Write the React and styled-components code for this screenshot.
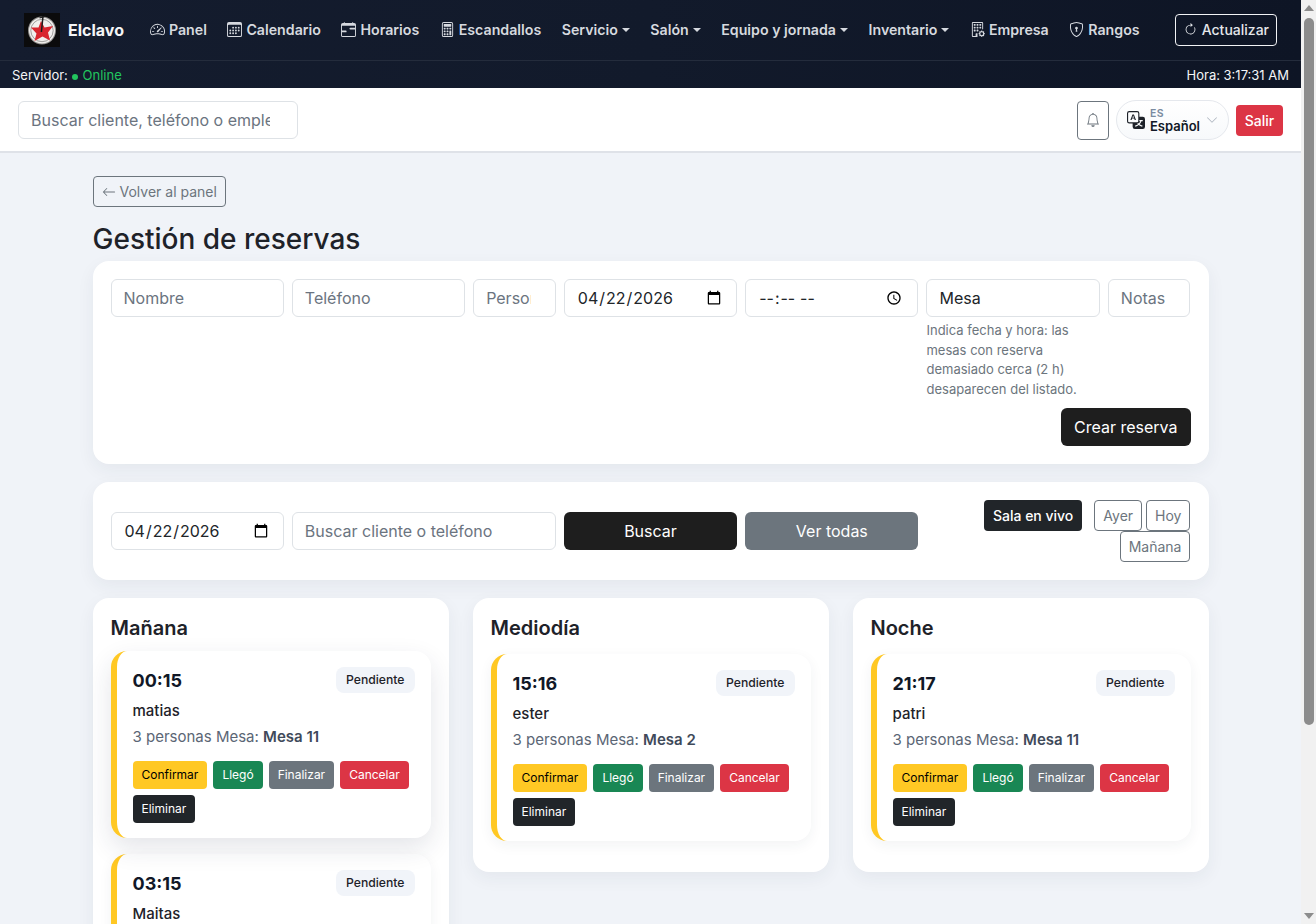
import React from "react";
import styled, { createGlobalStyle } from "styled-components";
import {
  BsSpeedometer2,
  BsCalendar3,
  BsCalendarRange,
  BsCalculator,
  BsBuildingGear,
  BsShieldLock,
  BsArrowClockwise,
  BsBell,
  BsTranslate,
  BsChevronDown,
  BsArrowLeft,
} from "react-icons/bs";

const GlobalStyle = createGlobalStyle`
  body {
    margin: 0;
    background: #f0f3f8;
    color: #1e2229;
    font-family: Inter, "Liberation Sans", sans-serif;
  }
  * { box-sizing: border-box; }
`;

const navLinks = [
  { label: "Panel", icon: <BsSpeedometer2 /> },
  { label: "Calendario", icon: <BsCalendar3 /> },
  { label: "Horarios", icon: <BsCalendarRange /> },
  { label: "Escandallos", icon: <BsCalculator /> },
  { label: "Servicio", caret: true },
  { label: "Salón", caret: true },
  { label: "Equipo y jornada", caret: true },
  { label: "Inventario", caret: true },
  { label: "Empresa", icon: <BsBuildingGear /> },
  { label: "Rangos", icon: <BsShieldLock /> },
];

const actions = [
  { label: "Confirmar", bg: "#ffc824", fg: "#000" },
  { label: "Llegó", bg: "#198754", fg: "#fff" },
  { label: "Finalizar", bg: "#6c757d", fg: "#fff" },
  { label: "Cancelar", bg: "#dc3545", fg: "#fff" },
  { label: "Eliminar", bg: "#212529", fg: "#fff" },
];

const shifts = [
  {
    title: "Mañana",
    bookings: [
      { time: "00:15", name: "matias", table: "Mesa 11", lifted: true },
      { time: "03:15", name: "Maitas", table: "Mesa 11" },
    ],
  },
  { title: "Mediodía", bookings: [{ time: "15:16", name: "ester", table: "Mesa 2" }] },
  { title: "Noche", bookings: [{ time: "21:17", name: "patri", table: "Mesa 11" }] },
];

const Logo = () => (
  <LogoBox>
    <svg width="36" height="34" viewBox="0 0 36 34">
      <rect width="36" height="34" fill="#0b0b0c" />
      <circle cx="18" cy="17.5" r="14" fill="#8f8d8b" />
      <circle cx="18" cy="17.5" r="13" fill="#f1efed" />
      <circle cx="18" cy="17.5" r="11.2" fill="none" stroke="#6a6866" strokeWidth="0.6" />
      <polygon
        points="17,8 20.5,14.5 29,13 24,19.5 26,27.5 18.5,23.5 10.5,28 12.5,20.5 7,14.5 14.5,14.5"
        fill="#d9252e"
      />
      <path d="M19 3 L17.4 19" stroke="#1d1d1d" strokeWidth="1.5" />
      <path d="M15.5 5 L21.5 3.2" stroke="#1d1d1d" strokeWidth="1.3" />
    </svg>
  </LogoBox>
);

const BookingCard = ({ booking }) => (
  <Booking $lifted={booking.lifted}>
    <BookingHead>
      <BookingTime>{booking.time}</BookingTime>
      <StatusBadge>Pendiente</StatusBadge>
    </BookingHead>
    <BookingName>{booking.name}</BookingName>
    <BookingMeta>
      3 personas Mesa: <strong>{booking.table}</strong>
    </BookingMeta>
    <ActionRow>
      {actions.map((a) => (
        <ActionButton key={a.label} $bg={a.bg} $fg={a.fg}>
          {a.label}
        </ActionButton>
      ))}
    </ActionRow>
  </Booking>
);

export default function App() {
  return (
    <>
      <GlobalStyle />
      <Page>
        <Header>
          <NavBar>
            <Logo />
            <Brand>Elclavo</Brand>
            <NavList>
              {navLinks.map((link) => (
                <NavLink key={link.label}>
                  {link.icon}
                  {link.label}
                  {link.caret && <Caret />}
                </NavLink>
              ))}
            </NavList>
            <RefreshButton>
              <BsArrowClockwise />
              Actualizar
            </RefreshButton>
          </NavBar>
          <StatusBar>
            <span>
              Servidor: <OnlineText><Dot />Online</OnlineText>
            </span>
            <span>Hora: 3:17:31 AM</span>
          </StatusBar>
        </Header>

        <TopBar>
          <SearchInput placeholder="Buscar cliente, teléfono o empleado" />
          <TopActions>
            <BellButton>
              <BsBell />
            </BellButton>
            <LangPill>
              <BsTranslate size={18} />
              <LangText>
                <LangCode>ES</LangCode>
                <LangName>Español</LangName>
              </LangText>
              <LangChevron />
            </LangPill>
            <LogoutButton>Salir</LogoutButton>
          </TopActions>
        </TopBar>

        <Main>
          <BackButton>
            <BsArrowLeft />
            Volver al panel
          </BackButton>
          <Title>Gestión de reservas</Title>

          <Panel>
            <FormGrid>
              <Field $span={2}><Input placeholder="Nombre" /></Field>
              <Field $span={2}><Input placeholder="Teléfono" /></Field>
              <Field $span={1}><Input placeholder="Personas" /></Field>
              <Field $span={2}><Input type="date" defaultValue="2026-04-22" /></Field>
              <Field $span={2}><Input type="time" /></Field>
              <Field $span={2}>
                <Input defaultValue="Mesa" />
                <Hint>
                  Indica fecha y hora: las mesas con reserva demasiado cerca (2 h) desaparecen del
                  listado.
                </Hint>
              </Field>
              <Field $span={1}><Input placeholder="Notas" /></Field>
            </FormGrid>
            <SubmitRow>
              <PrimaryButton>Crear reserva</PrimaryButton>
            </SubmitRow>
          </Panel>

          <Panel>
            <FilterGrid>
              <Field $span={2}><Input type="date" defaultValue="2026-04-22" /></Field>
              <Field $span={3}><Input placeholder="Buscar cliente o teléfono" /></Field>
              <Field $span={2}><WideButton $bg="#1e1e1e">Buscar</WideButton></Field>
              <Field $span={2}><WideButton $bg="#6c757d">Ver todas</WideButton></Field>
              <Field $span={3}>
                <QuickLinks>
                  <LiveButton>Sala en vivo</LiveButton>
                  <DayButton>Ayer</DayButton>
                  <DayButton>Hoy</DayButton>
                  <DayButton>Mañana</DayButton>
                </QuickLinks>
              </Field>
            </FilterGrid>
          </Panel>

          <Shifts>
            {shifts.map((shift) => (
              <ShiftColumn key={shift.title}>
                <ShiftTitle>{shift.title}</ShiftTitle>
                {shift.bookings.map((b) => (
                  <BookingCard key={b.time} booking={b} />
                ))}
              </ShiftColumn>
            ))}
          </Shifts>
        </Main>
      </Page>

      <ScrollTrack>
        <ScrollArrow />
        <ScrollThumb />
        <ScrollArrow $down />
      </ScrollTrack>
    </>
  );
}

// Styled Components
const Page = styled.div`
  margin-right: 15px;
`;

const ScrollTrack = styled.div`
  position: fixed;
  top: 0;
  right: 0;
  bottom: 0;
  display: flex;
  flex-direction: column;
  align-items: center;
  width: 15px;
  background: #f1f1f1;
`;

const ScrollArrow = styled.i`
  flex: none;
  width: 0;
  height: 0;
  margin: ${(p) => (p.$down ? "auto 0 5px" : "5px 0 0")};
  border-left: 5px solid transparent;
  border-right: 5px solid transparent;
  border-bottom: ${(p) => (p.$down ? "0" : "6px solid #8c8c8c")};
  border-top: ${(p) => (p.$down ? "6px solid #8c8c8c" : "0")};
`;

const ScrollThumb = styled.div`
  width: 10px;
  height: 707px;
  margin-top: 7px;
  background: #8c8c8c;
  border-radius: 5px;
`;

const Header = styled.header`
  background: linear-gradient(90deg, #141c2e 0%, #121a2b 50%, #0e1525 100%);
  color: #fff;
`;

const NavBar = styled.nav`
  display: flex;
  align-items: center;
  height: 61px;
  padding: 0 24px 1px;
  border-bottom: 1px solid #242c3c;
`;

const LogoBox = styled.div`
  display: flex;
  width: 36px;
  height: 34px;
`;

const Brand = styled.span`
  margin-left: 8px;
  font-size: 16px;
  font-weight: 700;
  color: #f4f5f7;
`;

const NavList = styled.div`
  display: flex;
  align-items: center;
  gap: 20.5px;
  margin-left: 26px;
`;

const NavLink = styled.a`
  display: flex;
  align-items: center;
  gap: 4px;
  font-size: 14.2px;
  font-weight: 600;
  color: #d6d9df;
  white-space: nowrap;

  svg {
    width: 15px;
    height: 15px;
  }
`;

const Caret = styled.i`
  width: 0;
  height: 0;
  border-top: 4px solid #d6d9df;
  border-left: 4px solid transparent;
  border-right: 4px solid transparent;
`;

const RefreshButton = styled.button`
  display: flex;
  align-items: center;
  gap: 5px;
  height: 32px;
  margin-left: auto;
  padding: 0 7px 0 8px;
  background: transparent;
  border: 1px solid #f2f3f5;
  border-radius: 4px;
  color: #e4e6ea;
  font: 500 14px Inter, sans-serif;

  svg {
    width: 13px;
    height: 13px;
  }
`;

const StatusBar = styled.div`
  display: flex;
  justify-content: space-between;
  align-items: center;
  height: 27px;
  padding: 0 12px;
  font-size: 13px;
  color: #f4f5f7;
`;

const OnlineText = styled.span`
  color: #22c55e;
`;

const Dot = styled.i`
  display: inline-block;
  width: 6px;
  height: 6px;
  margin: 0 5px 0 0;
  border-radius: 50%;
  background: #22c55e;
`;

const TopBar = styled.div`
  display: flex;
  justify-content: space-between;
  align-items: center;
  height: 65px;
  padding: 1px 18px 0;
  background: #fff;
  border-bottom: 2px solid #dfe2e8;
`;

const SearchInput = styled.input`
  width: 280px;
  height: 38px;
  padding: 6px 27px 6px 12px;
  background: #fff;
  border: 1px solid #dee2e6;
  border-radius: 6px;
  font: 400 16px Inter, sans-serif;
  color: #212529;

  &::placeholder {
    color: #6b7480;
  }
`;

const TopActions = styled.div`
  display: flex;
  align-items: center;
  gap: 7px;
`;

const BellButton = styled.button`
  display: flex;
  justify-content: center;
  align-items: center;
  width: 32px;
  height: 39px;
  padding: 0;
  background: transparent;
  border: 1px solid #6c757d;
  border-radius: 4px;
  color: #6c757d;
  font-size: 14px;
`;

const LangPill = styled.div`
  display: flex;
  align-items: center;
  width: 113px;
  height: 40px;
  padding: 0 10px;
  gap: 5px;
  background: linear-gradient(180deg, #ffffff, #f7f9fb);
  border: 1px solid #e5e8ed;
  border-radius: 20px;
  color: #1e2229;
`;

const LangText = styled.div`
  display: flex;
  flex-direction: column;
  line-height: 13px;
`;

const LangCode = styled.span`
  font-size: 10.5px;
  font-weight: 600;
  color: #7a8ba0;
  letter-spacing: 0.3px;
`;

const LangName = styled.span`
  font-size: 13px;
  font-weight: 600;
  color: #111827;
`;

const LangChevron = styled(BsChevronDown)`
  width: 12px;
  height: 12px;
  margin-left: auto;
  color: #a9b1bc;
`;

const LogoutButton = styled.button`
  height: 31px;
  width: 47px;
  padding: 0;
  background: #dc3545;
  border: 0;
  border-radius: 4px;
  color: #fff;
  font: 500 14px Inter, sans-serif;
`;

const Main = styled.main`
  max-width: 1140px;
  margin: 0 auto;
  padding: 23px 12px 100px;
`;

const BackButton = styled.button`
  display: flex;
  align-items: center;
  gap: 4px;
  height: 31px;
  padding: 0 8px;
  background: transparent;
  border: 1px solid #6c757d;
  border-radius: 4px;
  color: #6c757d;
  font: 400 14px Inter, sans-serif;
`;

const Title = styled.h2`
  margin: 15px 0 5px;
  font-size: 28px;
  font-weight: 500;
  line-height: 34px;
  color: #1e2229;
`;

const Panel = styled.section`
  margin-bottom: 18px;
  padding: 18px;
  background: #fff;
  border-radius: 16px;
  box-shadow: 0 6px 18px rgba(30, 45, 70, 0.06);
`;

const FormGrid = styled.div`
  display: grid;
  grid-template-columns: repeat(12, 1fr);
  gap: 8px;
`;

const FilterGrid = styled(FormGrid)`
  align-items: center;
`;

const Field = styled.div`
  grid-column: span ${(p) => p.$span};
  min-width: 0;
`;

const Input = styled.input`
  display: block;
  width: 100%;
  height: 38px;
  padding: 6px 24px 6px 12px;
  background: #fff;
  border: 1px solid #dee2e6;
  border-radius: 6px;
  font: 400 16px Inter, sans-serif;
  color: #212529;

  &[type="date"],
  &[type="time"] {
    padding-right: 12px;
  }

  &::placeholder {
    color: #6b7480;
  }
`;

const Hint = styled.div`
  margin-top: 4px;
  font-size: 13px;
  line-height: 19.5px;
  color: #6c757d;
`;

const SubmitRow = styled.div`
  display: flex;
  justify-content: flex-end;
  margin-top: 9px;
`;

const PrimaryButton = styled.button`
  height: 38px;
  padding: 0 13px;
  background: #1e1e1e;
  border: 0;
  border-radius: 6px;
  color: #fff;
  font: 400 16px Inter, sans-serif;
`;

const WideButton = styled.button`
  width: 100%;
  height: 38px;
  background: ${(p) => p.$bg};
  border: 0;
  border-radius: 6px;
  color: #fff;
  font: 400 16px Inter, sans-serif;
`;

const QuickLinks = styled.div`
  display: flex;
  flex-wrap: wrap;
  justify-content: flex-end;
  row-gap: 0;
`;

const LiveButton = styled.button`
  height: 31px;
  margin-right: 8px;
  padding: 0 9px;
  background: #212529;
  border: 0;
  border-radius: 4px;
  color: #fff;
  font: 500 14px Inter, sans-serif;
`;

const DayButton = styled.button`
  height: 31px;
  margin-left: 4px;
  padding: 0 8px;
  background: transparent;
  border: 1px solid #6c757d;
  border-radius: 4px;
  color: #6c757d;
  font: 400 14px Inter, sans-serif;
`;

const Shifts = styled.div`
  display: grid;
  grid-template-columns: repeat(3, 1fr);
  align-items: start;
  gap: 24px;
`;

const ShiftColumn = styled.section`
  padding: 18px;
  background: #fff;
  border-radius: 16px;
  box-shadow: 0 6px 18px rgba(30, 45, 70, 0.06);
`;

const ShiftTitle = styled.h3`
  margin: 0 0 14px;
  font-size: 20px;
  font-weight: 600;
  line-height: 24px;
  color: #1e2229;
`;

const Booking = styled.article`
  margin-bottom: 13px;
  padding: 16px 16px 15px;
  background: #fff;
  border-left: 6px solid #ffc824;
  border-radius: 16px;
  box-shadow: ${(p) =>
    p.$lifted ? "0 10px 26px rgba(30, 45, 70, 0.12)" : "0 4px 14px rgba(30, 45, 70, 0.06)"};
  transform: ${(p) => (p.$lifted ? "translateY(-3px)" : "none")};
`;

const BookingHead = styled.div`
  display: flex;
  justify-content: space-between;
  align-items: center;
  margin-bottom: 7px;
`;

const BookingTime = styled.span`
  font-size: 18px;
  font-weight: 700;
  color: #111827;
`;

const StatusBadge = styled.span`
  padding: 5px 10px;
  background: #f1f4f9;
  border-radius: 8px;
  font-size: 12.2px;
  font-weight: 500;
  line-height: 16px;
  color: #1e2229;
`;

const BookingName = styled.div`
  margin-bottom: 4px;
  font-size: 15px;
  font-weight: 500;
  line-height: 22px;
  color: #1e2229;
`;

const BookingMeta = styled.div`
  margin-bottom: 13px;
  font-size: 15px;
  line-height: 22px;
  color: #5b6675;

  strong {
    font-weight: 600;
    color: #3f4a5a;
  }
`;

const ActionRow = styled.div`
  display: flex;
  flex-wrap: wrap;
  gap: 6px;
`;

const ActionButton = styled.button`
  height: 28px;
  padding: 0 9px 1px;
  background: ${(p) => p.$bg};
  border: 0;
  border-radius: 4px;
  color: ${(p) => p.$fg};
  font: 400 12px Inter, sans-serif;
`;
